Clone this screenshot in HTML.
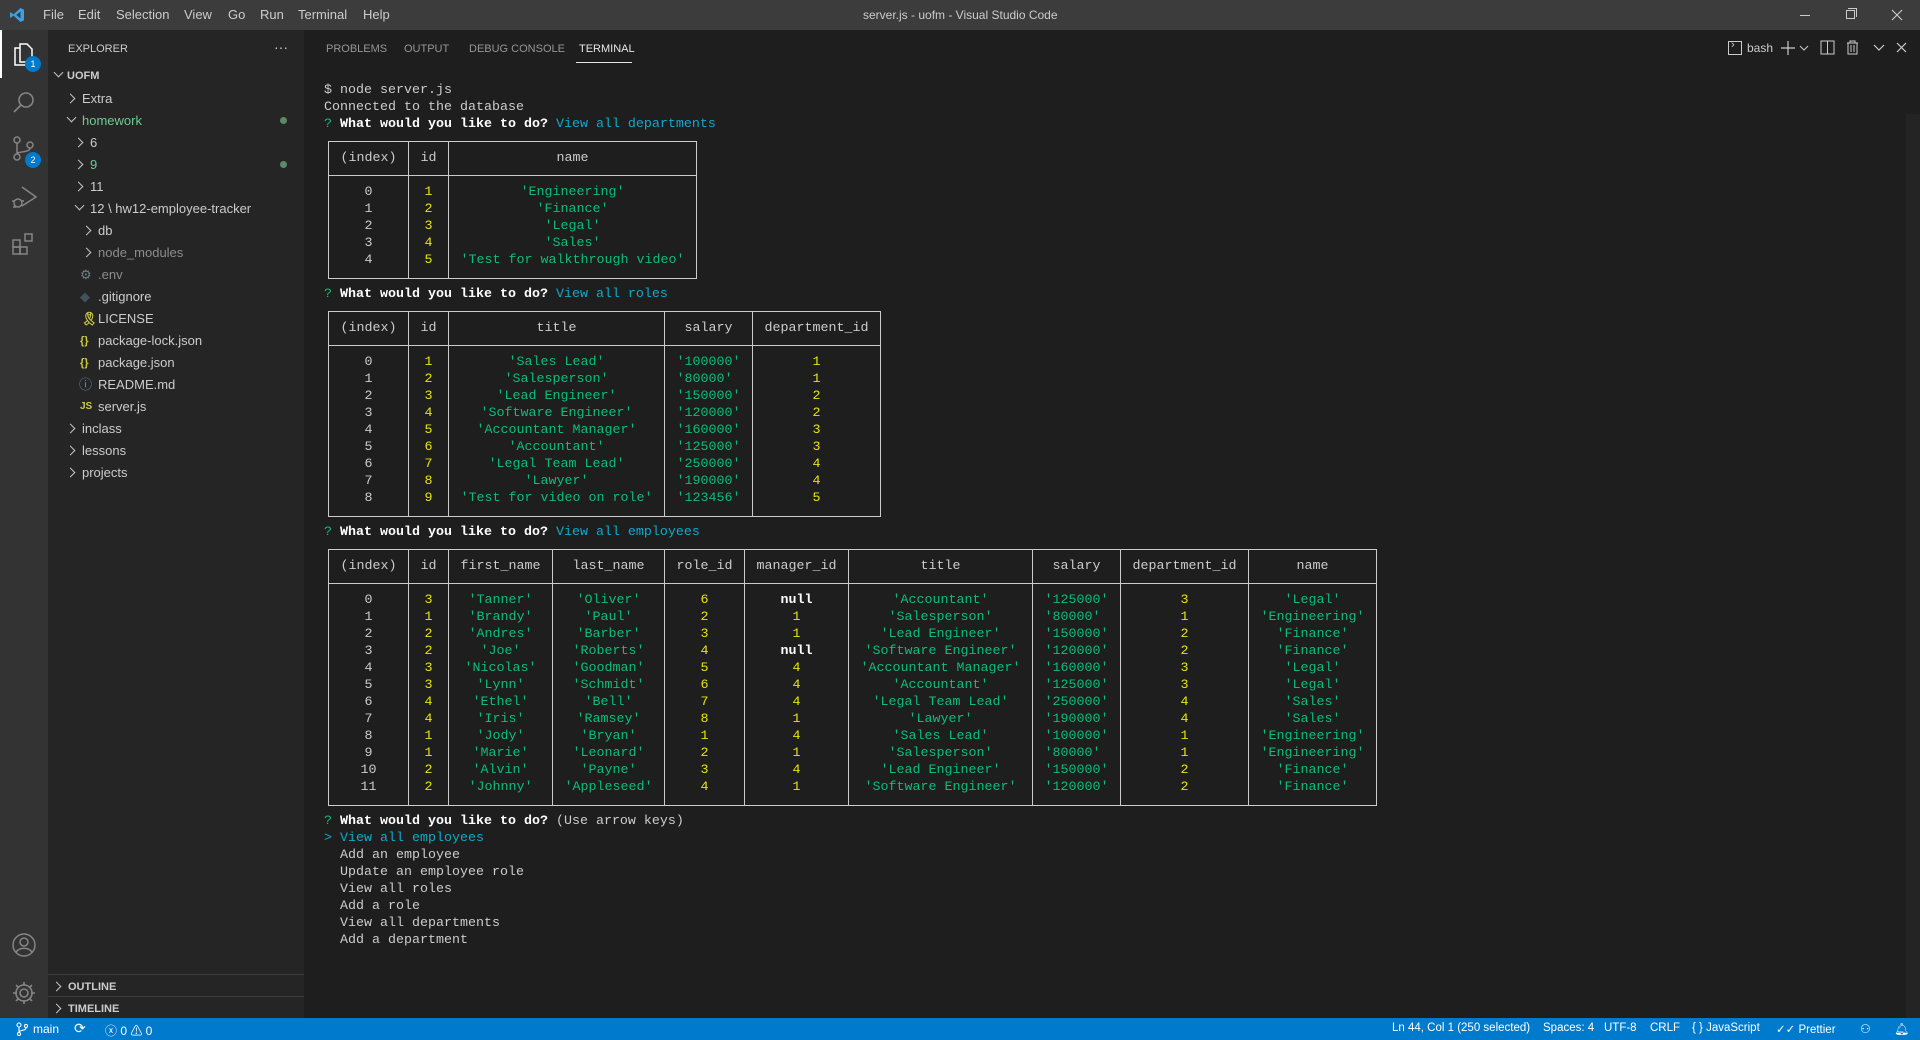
<!DOCTYPE html>
<html><head><meta charset="utf-8">
<style>
*{margin:0;padding:0;box-sizing:border-box}
body{width:1920px;height:1040px;overflow:hidden;background:#1e1e1e;font-family:"Liberation Sans",sans-serif;color:#cccccc;position:relative}
.abs{position:absolute}
#title{left:0;top:0;width:1920px;height:30px;background:#3c3c3c}
#title span.m{position:absolute;top:7px;font-size:13px;color:#cccccc}
#act{left:0;top:30px;width:48px;height:988px;background:#333333}
#side{left:48px;top:30px;width:256px;height:988px;background:#252526}
.row{position:absolute;font-size:13px;height:22px;line-height:22px;white-space:nowrap;color:#cccccc}
.chev{position:absolute;width:7px;height:7px;border-right:1.3px solid #c5c5c5;border-bottom:1.3px solid #c5c5c5}
.cr{transform:rotate(-45deg)}
.cd{transform:rotate(45deg)}
#status{left:0;top:1018px;width:1920px;height:22px;background:#007acc;color:#fff;font-size:12px}
#status span{position:absolute;top:4px;white-space:nowrap}
.tab{position:absolute;top:42px;font-size:11px;color:#969696}
.t{position:absolute;left:324px;height:17px;line-height:17px;font-family:"Liberation Mono",monospace;font-size:13.33px;white-space:pre;color:#cccccc}
.b{font-weight:bold;color:#ffffff}
.g{color:#0dbc79}.y{color:#e5e510}.c{color:#11a8cd}
table{position:absolute;left:328px;border-collapse:collapse;table-layout:fixed;font-family:"Liberation Mono",monospace;font-size:13.33px;line-height:17px;color:#cccccc}
td{border:1px solid #cccccc;text-align:center;white-space:pre;padding:0;overflow:visible}
tr.h td{height:34px;vertical-align:middle}
tr.d td{padding:8px 0 9px;vertical-align:top}
.badge{position:absolute;width:16px;height:16px;border-radius:8px;background:#007acc;color:#fff;font-size:9px;text-align:center;line-height:16px}
#term{position:absolute;left:0;top:2px;width:1920px;height:1000px}
#sb{position:absolute;left:0;top:1px;width:320px;height:500px}
</style></head><body>

<div id="title" class="abs">
<svg class="abs" style="left:9px;top:7px" width="16" height="16" viewBox="0 0 16 16"><path d="M11.5 1 L15 2.7 V13.3 L11.5 15 L4.5 8.6 L1.8 10.8 L1 10.3 V5.7 L1.8 5.2 L4.5 7.4 Z M11.5 4.6 L7.2 8 L11.5 11.4 Z" fill="#3ba1e6"/></svg>
<span class="m" style="left:43px">File</span><span class="m" style="left:78px">Edit</span><span class="m" style="left:116px">Selection</span><span class="m" style="left:184px">View</span><span class="m" style="left:228px">Go</span><span class="m" style="left:260px">Run</span><span class="m" style="left:298px">Terminal</span><span class="m" style="left:363px">Help</span>
<span class="m" style="left:863px;font-size:12px;top:8px">server.js - uofm - Visual Studio Code</span>
<div class="abs" style="left:1800px;top:15px;width:10px;height:1px;background:#ccc"></div>
<div class="abs" style="left:1846px;top:10px;width:9px;height:9px;border:1px solid #ccc"></div>
<div class="abs" style="left:1848px;top:8px;width:9px;height:9px;border-top:1px solid #ccc;border-right:1px solid #ccc"></div>
<svg class="abs" style="left:1891px;top:9px" width="12" height="12"><path d="M1 1L11 11M11 1L1 11" stroke="#ccc" stroke-width="1.1"/></svg>
</div>

<div id="act" class="abs">
<div class="abs" style="left:0;top:0;width:2px;height:48px;background:#fff"></div>
<svg class="abs" style="left:12px;top:11px" width="24" height="26" viewBox="0 0 24 26" fill="none" stroke="#fff" stroke-width="1.5"><path d="M8 3h7l5 5v13H8z"/><path d="M8 7H3v17h12v-3"/></svg>
<div class="badge" style="left:25px;top:26px">1</div>
<svg class="abs" style="left:12px;top:60px" width="24" height="24" fill="none" stroke="#858585" stroke-width="1.6"><circle cx="14" cy="10" r="7"/><path d="M9 15L2 22"/></svg>
<svg class="abs" style="left:12px;top:106px" width="24" height="26" fill="none" stroke="#858585" stroke-width="1.5"><circle cx="5" cy="4" r="3"/><circle cx="18" cy="9" r="3"/><circle cx="5" cy="21" r="3"/><path d="M5 7v11M18 12c0 5-13 3-13 6"/></svg>
<div class="badge" style="left:25px;top:122px">2</div>
<svg class="abs" style="left:10px;top:153px" width="28" height="28" fill="none" stroke="#858585" stroke-width="1.5"><path d="M12 4l14 10-14 9"/><circle cx="8" cy="20" r="4"/><path d="M2 18h3M11 18h3M3 24h3"/></svg>
<svg class="abs" style="left:11px;top:201px" width="26" height="26" fill="none" stroke="#858585" stroke-width="1.5"><rect x="2" y="9" width="7" height="7"/><rect x="2" y="16" width="7" height="7"/><rect x="9" y="16" width="7" height="7"/><rect x="14" y="3" width="7" height="7"/></svg>
<svg class="abs" style="left:11px;top:902px" width="26" height="26" fill="none" stroke="#858585" stroke-width="1.5"><circle cx="13" cy="13" r="11"/><circle cx="13" cy="10" r="4"/><path d="M5 20c4-5 12-5 16 0"/></svg>
<svg class="abs" style="left:11px;top:950px" width="26" height="26" fill="none" stroke="#858585" stroke-width="1.6"><circle cx="13" cy="13" r="4"/><path d="M13 2v4M13 20v4M2 13h4M20 13h4M5 5l3 3M18 18l3 3M5 21l3-3M18 8l3-3"/><circle cx="13" cy="13" r="8"/></svg>
</div>

<div id="side" class="abs"></div>
<div id="sb">
<div class="row" style="left:68px;top:37px;font-size:11px">EXPLORER</div>
<div class="row" style="left:274px;top:35px;font-size:14px">···</div>
<div class="chev cd" style="left:55px;top:68px"></div><div class="row" style="left:67px;top:64px;font-size:11px;font-weight:bold">UOFM</div>
<div class="chev cr" style="left:67px;top:94px"></div><div class="row" style="left:82px;top:87px">Extra</div>
<div class="chev cd" style="left:68px;top:113px"></div><div class="row" style="left:82px;top:109px;color:#73c991">homework</div>
<div class="abs" style="left:280px;top:116px;width:7px;height:7px;border-radius:4px;background:#5c8a68"></div>
<div class="chev cr" style="left:75px;top:138px"></div><div class="row" style="left:90px;top:131px">6</div>
<div class="chev cr" style="left:75px;top:160px"></div><div class="row" style="left:90px;top:153px;color:#73c991">9</div>
<div class="abs" style="left:280px;top:160px;width:7px;height:7px;border-radius:4px;background:#5c8a68"></div>
<div class="chev cr" style="left:75px;top:182px"></div><div class="row" style="left:90px;top:175px">11</div>
<div class="chev cd" style="left:76px;top:201px"></div><div class="row" style="left:90px;top:197px">12 \ hw12-employee-tracker</div>
<div class="chev cr" style="left:83px;top:226px"></div><div class="row" style="left:98px;top:219px">db</div>
<div class="chev cr" style="left:83px;top:248px"></div><div class="row" style="left:98px;top:241px;color:#8c8c8c">node_modules</div>
<div class="row" style="left:80px;top:263px;color:#6d8086">⚙</div><div class="row" style="left:98px;top:263px;color:#8c8c8c">.env</div>
<div class="row" style="left:80px;top:285px;color:#41535b">◆</div><div class="row" style="left:98px;top:285px">.gitignore</div>
<div class="row" style="left:81px;top:307px;color:#cbcb41;font-weight:bold">&#x1F397;</div><div class="row" style="left:98px;top:307px">LICENSE</div>
<div class="row" style="left:80px;top:329px;color:#cbcb41;font-size:11px;font-weight:bold">{}</div><div class="row" style="left:98px;top:329px">package-lock.json</div>
<div class="row" style="left:80px;top:351px;color:#cbcb41;font-size:11px;font-weight:bold">{}</div><div class="row" style="left:98px;top:351px">package.json</div>
<div class="row" style="left:79px;top:373px;color:#519aba">ⓘ</div><div class="row" style="left:98px;top:373px">README.md</div>
<div class="row" style="left:80px;top:395px;color:#cbcb41;font-size:10px;font-weight:bold">JS</div><div class="row" style="left:98px;top:395px">server.js</div>
<div class="chev cr" style="left:67px;top:424px"></div><div class="row" style="left:82px;top:417px">inclass</div>
<div class="chev cr" style="left:67px;top:446px"></div><div class="row" style="left:82px;top:439px">lessons</div>
<div class="chev cr" style="left:67px;top:468px"></div><div class="row" style="left:82px;top:461px">projects</div>
</div>
<div class="abs" style="left:48px;top:974px;width:256px;height:1px;background:#3c3c3c"></div>
<div class="abs" style="left:48px;top:996px;width:256px;height:1px;background:#3c3c3c"></div>
<div class="chev cr" style="left:53px;top:983px"></div><div class="row" style="left:68px;top:976px;font-size:11px;font-weight:bold">OUTLINE</div>
<div class="chev cr" style="left:53px;top:1005px"></div><div class="row" style="left:68px;top:998px;font-size:11px;font-weight:bold">TIMELINE</div>

<span class="tab" style="left:326px;top:43px">PROBLEMS</span><span class="tab" style="left:404px;top:43px">OUTPUT</span><span class="tab" style="left:469px;top:43px">DEBUG CONSOLE</span><span class="tab" style="left:579px;top:43px;color:#e7e7e7">TERMINAL</span>
<div class="abs" style="left:576px;top:62px;width:56px;height:1px;background:#e7e7e7"></div>
<div class="abs" style="left:1728px;top:41px;width:14px;height:14px;border:1px solid #ccc"></div><span class="abs" style="left:1731px;top:39px;font-size:11px">›</span>
<span class="abs" style="left:1747px;top:41px;font-size:12px">bash</span>
<svg class="abs" style="left:1780px;top:40px" width="16" height="16"><path d="M8 1v14M1 8h14" stroke="#ccc" stroke-width="1.2"/></svg>
<svg class="abs" style="left:1799px;top:44px" width="10" height="8"><path d="M1 2l4 4 4-4" stroke="#ccc" fill="none"/></svg>
<svg class="abs" style="left:1820px;top:40px" width="15" height="15"><rect x="1" y="1" width="13" height="13" stroke="#ccc" fill="none"/><path d="M7.5 1v13" stroke="#ccc"/></svg>
<svg class="abs" style="left:1846px;top:40px" width="13" height="15"><path d="M1 3h11M4 3V1h5v2M2 3v11h9V3M5 5v7M8 5v7" stroke="#ccc" fill="none"/></svg>
<svg class="abs" style="left:1873px;top:44px" width="12" height="8"><path d="M1 1l5 5 5-5" stroke="#ccc" fill="none" stroke-width="1.2"/></svg>
<svg class="abs" style="left:1896px;top:42px" width="11" height="11"><path d="M1 1l9 9M10 1l-9 9" stroke="#ccc" stroke-width="1.2"/></svg>
<div class="abs" style="left:1906px;top:114px;width:14px;height:904px;background:#242424"></div>

<div id="term">
<div class="t" style="top:80px">$ node server.js</div>
<div class="t" style="top:97px">Connected to the database</div>
<div class="t" style="top:114px"><span class="g">?</span> <span class="b">What would you like to do?</span> <span class="c">View all departments</span></div>

<table style="top:139px;width:368px">
<col style="width:80px"><col style="width:40px"><col style="width:248px">
<tr class="h"><td>(index)</td><td>id</td><td>name</td></tr>
<tr class="d"><td>0<br>1<br>2<br>3<br>4</td><td class="y">1<br>2<br>3<br>4<br>5</td><td class="g">'Engineering'<br>'Finance'<br>'Legal'<br>'Sales'<br>'Test for walkthrough video'</td></tr>
</table>

<div class="t" style="top:284px"><span class="g">?</span> <span class="b">What would you like to do?</span> <span class="c">View all roles</span></div>

<table style="top:309px;width:552px">
<col style="width:80px"><col style="width:40px"><col style="width:216px"><col style="width:88px"><col style="width:128px">
<tr class="h"><td>(index)</td><td>id</td><td>title</td><td>salary</td><td>department_id</td></tr>
<tr class="d"><td>0<br>1<br>2<br>3<br>4<br>5<br>6<br>7<br>8</td><td class="y">1<br>2<br>3<br>4<br>5<br>6<br>7<br>8<br>9</td><td class="g">'Sales Lead'<br>'Salesperson'<br>'Lead Engineer'<br>'Software Engineer'<br>'Accountant Manager'<br>'Accountant'<br>'Legal Team Lead'<br>'Lawyer'<br>'Test for video on role'</td><td class="g">'100000'<br>'80000' <br>'150000'<br>'120000'<br>'160000'<br>'125000'<br>'250000'<br>'190000'<br>'123456'</td><td class="y">1<br>1<br>2<br>2<br>3<br>3<br>4<br>4<br>5</td></tr>
</table>

<div class="t" style="top:522px"><span class="g">?</span> <span class="b">What would you like to do?</span> <span class="c">View all employees</span></div>

<table style="top:547px;width:1048px">
<col style="width:80px"><col style="width:40px"><col style="width:104px"><col style="width:112px"><col style="width:80px"><col style="width:104px"><col style="width:184px"><col style="width:88px"><col style="width:128px"><col style="width:128px">
<tr class="h"><td>(index)</td><td>id</td><td>first_name</td><td>last_name</td><td>role_id</td><td>manager_id</td><td>title</td><td>salary</td><td>department_id</td><td>name</td></tr>
<tr class="d"><td>0<br>1<br>2<br>3<br>4<br>5<br>6<br>7<br>8<br>9<br>10<br>11</td><td class="y">3<br>1<br>2<br>2<br>3<br>3<br>4<br>4<br>1<br>1<br>2<br>2</td><td class="g">'Tanner'<br>'Brandy'<br>'Andres'<br>'Joe'<br>'Nicolas'<br>'Lynn'<br>'Ethel'<br>'Iris'<br>'Jody'<br>'Marie'<br>'Alvin'<br>'Johnny'</td><td class="g">'Oliver'<br>'Paul'<br>'Barber'<br>'Roberts'<br>'Goodman'<br>'Schmidt'<br>'Bell'<br>'Ramsey'<br>'Bryan'<br>'Leonard'<br>'Payne'<br>'Appleseed'</td><td class="y">6<br>2<br>3<br>4<br>5<br>6<br>7<br>8<br>1<br>2<br>3<br>4</td><td class="y"><span class="b">null</span><br>1<br>1<br><span class="b">null</span><br>4<br>4<br>4<br>1<br>4<br>1<br>4<br>1</td><td class="g">'Accountant'<br>'Salesperson'<br>'Lead Engineer'<br>'Software Engineer'<br>'Accountant Manager'<br>'Accountant'<br>'Legal Team Lead'<br>'Lawyer'<br>'Sales Lead'<br>'Salesperson'<br>'Lead Engineer'<br>'Software Engineer'</td><td class="g">'125000'<br>'80000' <br>'150000'<br>'120000'<br>'160000'<br>'125000'<br>'250000'<br>'190000'<br>'100000'<br>'80000' <br>'150000'<br>'120000'</td><td class="y">3<br>1<br>2<br>2<br>3<br>3<br>4<br>4<br>1<br>1<br>2<br>2</td><td class="g">'Legal'<br>'Engineering'<br>'Finance'<br>'Finance'<br>'Legal'<br>'Legal'<br>'Sales'<br>'Sales'<br>'Engineering'<br>'Engineering'<br>'Finance'<br>'Finance'</td></tr>
</table>

<div class="t" style="top:811px"><span class="g">?</span> <span class="b">What would you like to do?</span> (Use arrow keys)</div>
<div class="t c" style="top:828px">&gt; View all employees</div>
<div class="t" style="top:845px">  Add an employee</div>
<div class="t" style="top:862px">  Update an employee role</div>
<div class="t" style="top:879px">  View all roles</div>
<div class="t" style="top:896px">  Add a role</div>
<div class="t" style="top:913px">  View all departments</div>
<div class="t" style="top:930px">  Add a department</div>
</div>

<div id="status" class="abs">
<svg class="abs" style="left:16px;top:4px" width="12" height="14" fill="none" stroke="#fff" stroke-width="1.1"><circle cx="3" cy="3" r="2"/><circle cx="3" cy="12" r="1.6"/><circle cx="10" cy="4" r="1.6"/><path d="M3 5v5M10 6c0 3-7 2-7 4"/></svg>
<span style="left:33px">main</span>
<span style="left:74px;font-size:14px;top:2px">⟳</span>
<span style="left:105px">ⓧ 0 ⚠ 0</span>
<span style="left:1392px;font-size:11.5px">Ln 44, Col 1 (250 selected)</span>
<span style="left:1543px;font-size:11.5px">Spaces: 4</span>
<span style="left:1604px;font-size:11.5px">UTF-8</span>
<span style="left:1650px;font-size:11.5px">CRLF</span>
<span style="left:1692px;font-size:11.5px">{ }  JavaScript</span>
<span style="left:1776px;font-size:11.5px">✓✓ Prettier</span>
<span style="left:1860px">⚇</span>
<span style="left:1894px">🔔︎</span>
</div>
</body></html>
